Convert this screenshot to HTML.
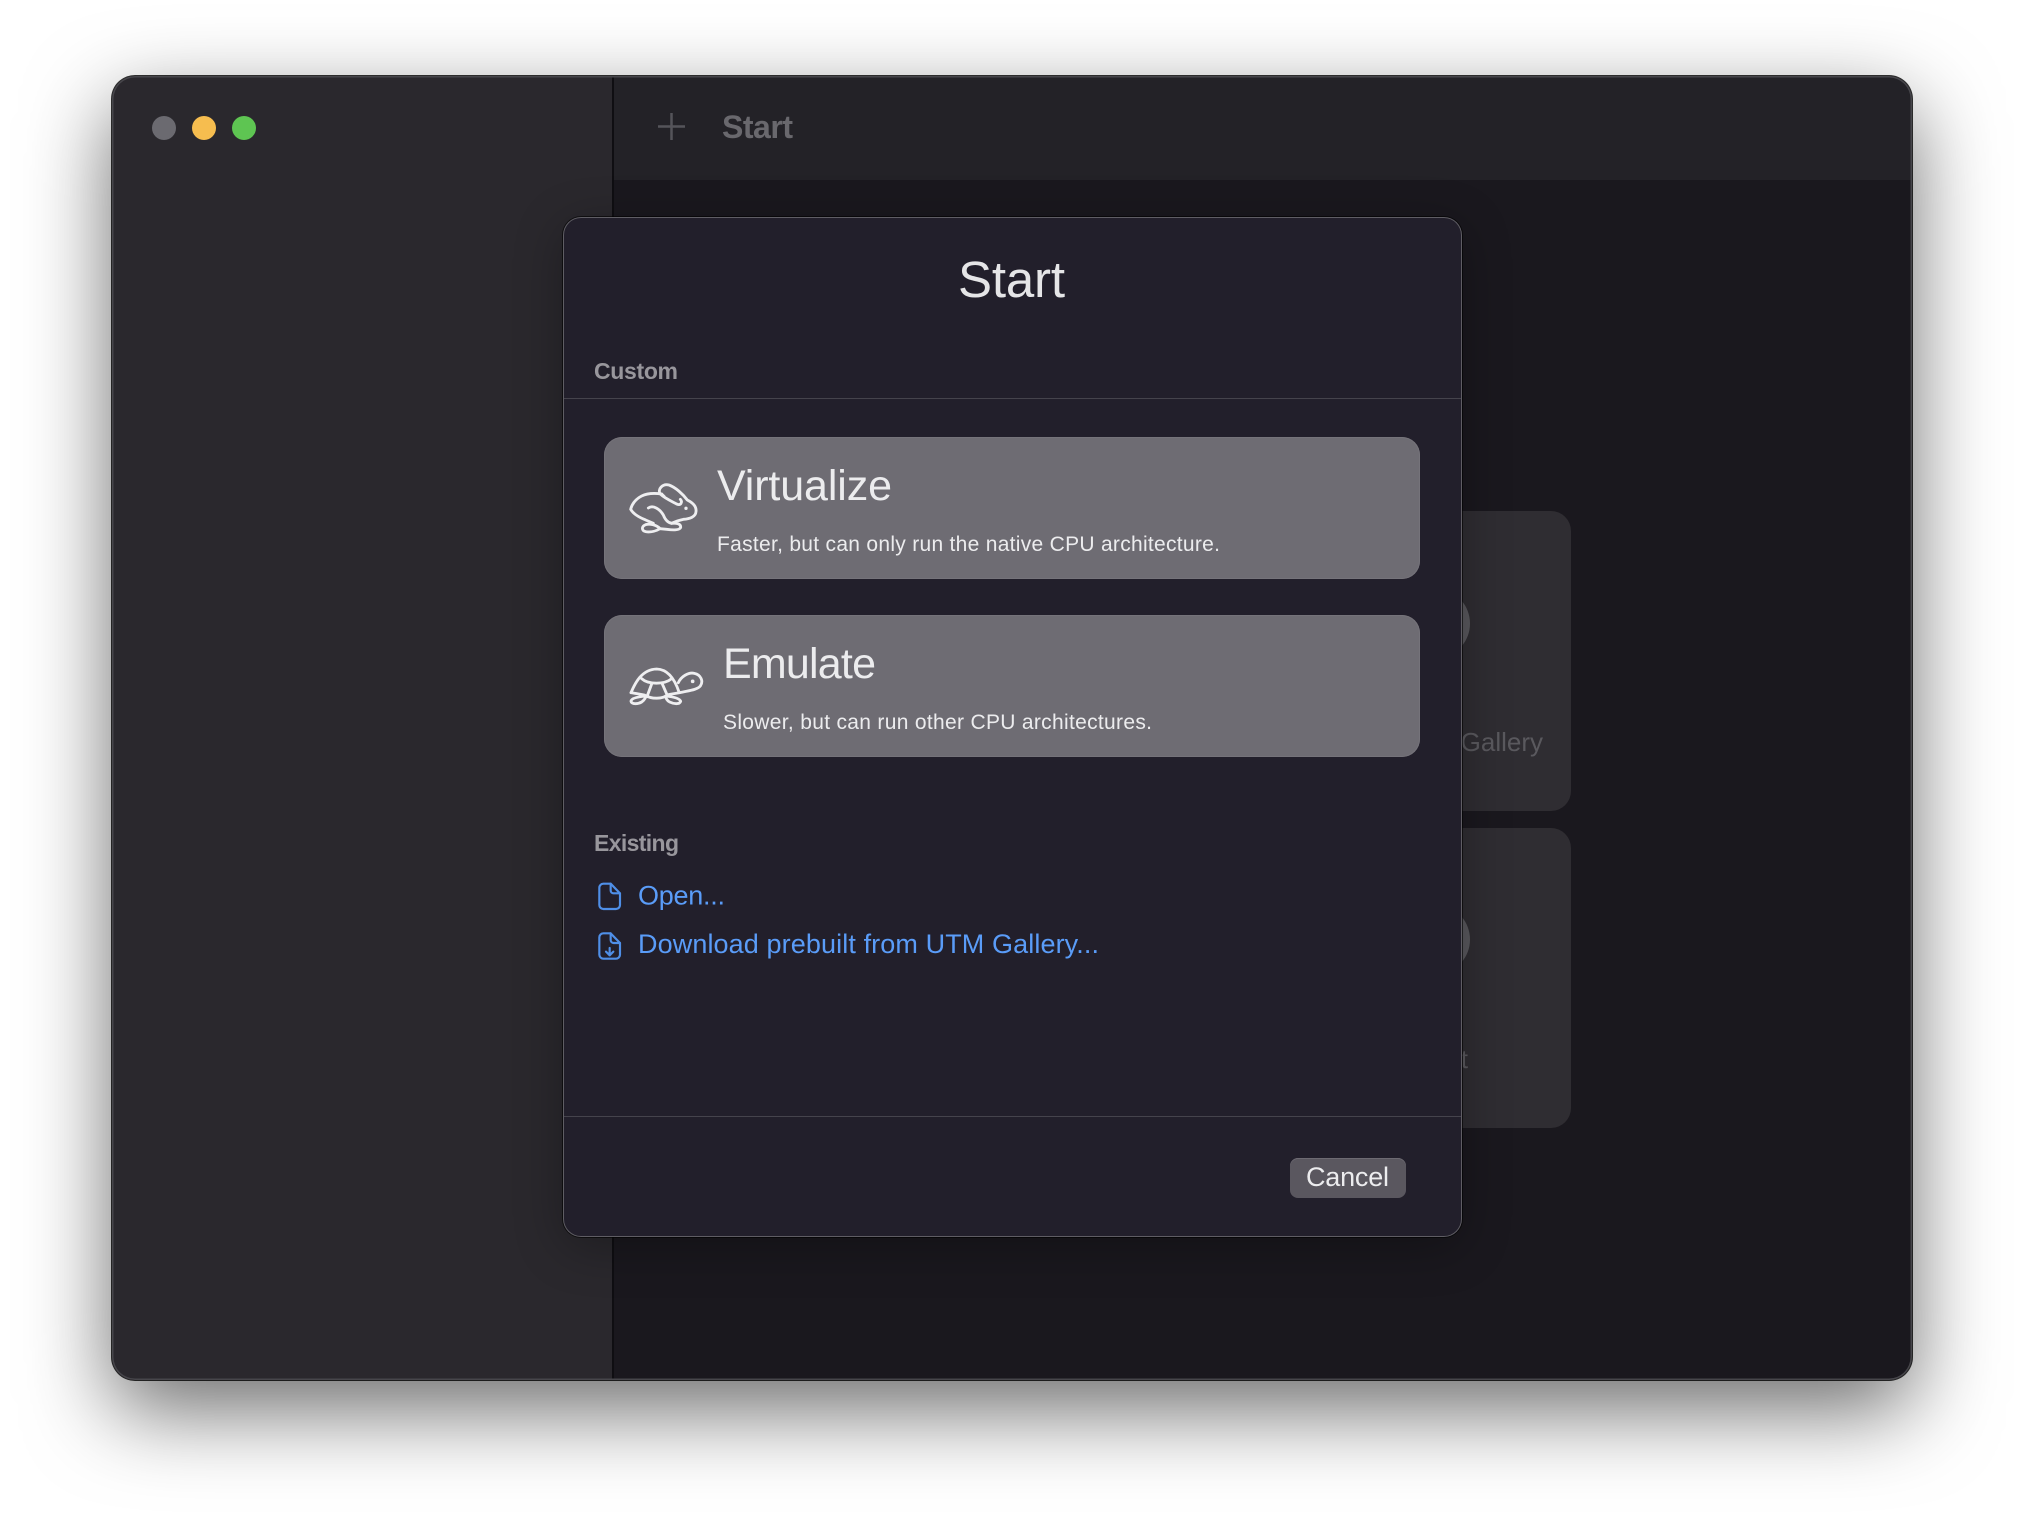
<!DOCTYPE html>
<html><head><meta charset="utf-8"><style>
html,body{margin:0;padding:0;background:#fff;width:2024px;height:1528px;overflow:hidden}
.a{position:absolute;box-sizing:border-box}
svg text{font-family:"Liberation Sans",sans-serif}
</style></head><body>
<div class="a" style="left:112px;top:76px;width:1800px;height:1304px;border-radius:23px;background:#1a181e;box-shadow:0 30px 85px rgba(0,0,0,.58),0 0 0 1px rgba(0,0,0,.8);overflow:hidden">
 <div class="a" style="left:0;top:0;width:502px;height:1304px;background:#2a282d;border-right:2px solid #0f0e12"></div>
 <div class="a" style="left:502px;top:0;right:0;height:104px;background:#232227"></div>
 <div class="a" style="left:1339px;top:435px;width:120px;height:300px;border-radius:0 20px 20px 0;background:#2f2d32"></div>
 <div class="a" style="left:1339px;top:752px;width:120px;height:300px;border-radius:0 20px 20px 0;background:#2f2d32"></div>
 <div class="a" style="left:1299px;top:515px;width:59px;height:65px;border-radius:50%;background:#59585d"></div>
 <div class="a" style="left:1299px;top:831px;width:59px;height:65px;border-radius:50%;background:#59585d"></div>
 <div class="a" style="left:0;top:0;width:1800px;height:1304px;border-radius:23px;box-shadow:inset 0 0 0 1.500px #47464b"></div>
</div>
<div class="a" style="left:152px;top:116px;width:24px;height:24px;border-radius:50%;background:#6b6a70"></div>
<div class="a" style="left:192px;top:116px;width:24px;height:24px;border-radius:50%;background:#f6bd4f"></div>
<div class="a" style="left:232px;top:116px;width:24px;height:24px;border-radius:50%;background:#5ec552"></div>

<svg class="a" style="left:0;top:0" width="2024" height="1528" viewBox="0 0 2024 1528">
 <path d="M671.500 113V140M658 126.500H685" stroke="#55545a" stroke-width="2.500" fill="none"/>
 <text x="722" y="138" font-size="32" font-weight="700" fill="#69686d" textLength="71">Start</text>
 <text x="1543" y="751" font-size="26" fill="#5a595e" text-anchor="end">Gallery</text>
 <text x="1468" y="1068" font-size="26" fill="#5a595e" text-anchor="end">t</text>
</svg>

<div class="a" style="left:564px;top:218px;width:897px;height:1018px;border-radius:17px;background:#221f2b;box-shadow:0 0 0 1px #5f5d64,0 0 0 2px rgba(0,0,0,.6),0 10px 50px rgba(0,0,0,.3)">
 <div class="a" style="left:0;right:0;top:180px;height:1px;background:#45434c"></div>
 <div class="a" style="left:0;right:0;top:898px;height:1px;background:#45434c"></div>
 <div class="a" style="left:40px;top:219px;width:816px;height:142px;border-radius:18px;background:#6e6c73;box-shadow:inset 0 0 0 1px #75737a"></div>
 <div class="a" style="left:40px;top:397px;width:816px;height:142px;border-radius:18px;background:#6e6c73;box-shadow:inset 0 0 0 1px #75737a"></div>
 <div class="a" style="left:726px;top:940px;width:116px;height:40px;border-radius:8px;background:#5a575f;box-shadow:inset 0 1px 0 #6d6a72"></div>
</div>

<svg class="a" style="left:0;top:0" width="2024" height="1528" viewBox="0 0 2024 1528">
 <text x="958" y="297" font-size="51" fill="#e5e5e7" textLength="107">Start</text>
 <text x="594" y="379" font-size="23" font-weight="700" fill="#98969c" textLength="84">Custom</text>
 <text x="717" y="500" font-size="43" fill="#ececee" textLength="175">Virtualize</text>
 <text x="717" y="551" font-size="21" fill="#ececee" textLength="503">Faster, but can only run the native CPU architecture.</text>
 <text x="723" y="678" font-size="43" fill="#ececee" textLength="153">Emulate</text>
 <text x="723" y="729" font-size="21" fill="#ececee" textLength="429">Slower, but can run other CPU architectures.</text>
 <text x="594" y="851" font-size="23" font-weight="700" fill="#98969c" textLength="85">Existing</text>
 <text x="638" y="904.500" font-size="27" fill="#5a9cf8" textLength="87">Open...</text>
 <text x="638" y="953" font-size="27" fill="#5a9cf8" textLength="461">Download prebuilt from UTM Gallery...</text>
 <text x="1306" y="1186" font-size="27" fill="#ececee" textLength="83">Cancel</text>

 <g transform="translate(625 480) scale(.3333)" fill="none" stroke="#eeeef0" stroke-width="8.500" stroke-linecap="round" stroke-linejoin="round">
  <path d="M110 42C95 40 70 38 50 48C30 58 20 75 17 88C25 102 42 112 62 120L85 130"/>
  <path d="M110 42L118 50M155 72C140 64 118 54 106 42C96 28 113 10 132 15C152 22 174 43 187 60C203 68 215 80 213 95C212 110 195 117 175 118C165 120 150 125 140 130C155 128 168 132 167 142C164 152 140 150 125 148L105 146"/>
  <path d="M155 72C168 78 173 66 166 58"/>
  <path d="M70 84C85 74 105 88 115 105C120 118 128 128 140 130"/>
  <path d="M105 146C95 135 75 130 62 134C48 140 50 152 62 155C78 158 95 152 105 146Z"/>
  <circle cx="183" cy="85" r="5" fill="#eeeef0" stroke="none"/>
 </g>
 <g transform="translate(625 660) scale(.3333)" fill="none" stroke="#eeeef0" stroke-width="8.500" stroke-linecap="round" stroke-linejoin="round">
  <path d="M18 98C30 70 50 28 95 27C130 28 150 60 162 96"/>
  <path d="M50 56C70 74 118 74 140 56"/>
  <path d="M80 72L66 110M112 72L126 104"/>
  <path d="M18 98L58 105C80 118 112 118 130 104L165 98C190 92 216 90 226 78C236 64 228 44 208 40C190 36 168 50 160 68"/>
  <path d="M62 108C42 110 18 114 18 124C20 134 40 132 50 126C58 120 62 114 62 108Z"/>
  <path d="M122 108C140 110 164 114 167 124C164 134 146 132 134 126C126 122 122 114 122 108Z"/>
  <circle cx="203" cy="64" r="5.500" fill="#eeeef0" stroke="none"/>
 </g>
 <g transform="translate(590 875) scale(.3333)" fill="none" stroke="#4f8fe8" stroke-width="6.500" stroke-linecap="round" stroke-linejoin="round">
  <path d="M40 26H62L90 55V90A12 12 0 0 1 78 102H40A12 12 0 0 1 28 90V38A12 12 0 0 1 40 26Z"/>
  <path d="M62 26V46A9 9 0 0 0 71 55H90"/>
  <g transform="translate(0 29)">
   <path d="M40 146H62L90 175V210A12 12 0 0 1 78 222H40A12 12 0 0 1 28 210V158A12 12 0 0 1 40 146Z"/>
   <path d="M62 146V166A9 9 0 0 0 71 175H90"/>
   <path d="M59 190V212M48 201L59 212L70 201"/>
  </g>
 </g>
</svg>
</body></html>
